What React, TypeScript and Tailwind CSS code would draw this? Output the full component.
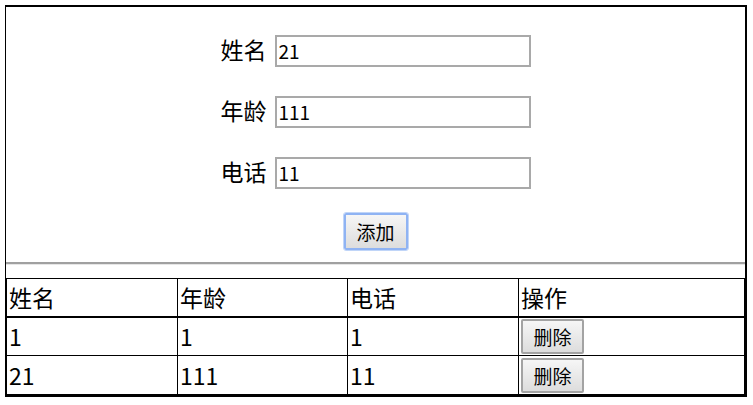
import React from "react";

const font = { fontFamily: '"Noto Sans CJK SC", "Noto Sans", sans-serif' };

function Field({ label, value }: { label: string; value: string }) {
  return (
    <div className="flex items-center gap-[8px]">
      <span className="text-[23px] leading-none text-black -mt-[3px]">{label}</span>
      <input
        readOnly
        value={value}
        className="w-[256px] h-[32px] border-2 border-[#a9a9a9] bg-white px-[2px] pb-[2px] text-[19px] text-black outline-none"
        style={font}
      />
    </div>
  );
}

function DelButton() {
  return (
    <button
      className="ml-[2px] w-[63px] h-[35px] rounded-[2px] border-2 border-[#a3a3a3] bg-gradient-to-b from-[#f6f6f6] to-[#dddddd] text-[19px] leading-none text-black"
      style={font}
    >
      删除
    </button>
  );
}

export default function App() {
  const rows = [
    { name: "1", age: "1", phone: "1" },
    { name: "21", age: "111", phone: "11" },
  ];
  return (
    <div className="w-[753px] h-[405px] bg-white pt-[5px] pl-[5px]" style={font}>
      <div className="w-[742px] h-[392px] border-t-2 border-l border-r-2 border-b-2 border-black flex flex-col">
        <div className="flex flex-col items-center pt-[28px]">
          <div className="flex flex-col items-center gap-[29px]">
            <Field label="姓名" value="21" />
            <Field label="年龄" value="111" />
            <Field label="电话" value="11" />
          </div>
          <button
            className="mt-[24px] w-[64px] h-[37px] rounded-[2px] border-2 border-[#8fb3f3] outline outline-1 outline-[#c0d5f8] bg-gradient-to-b from-[#f6f6f6] to-[#dddddd] text-[19px] leading-none text-black"
            style={font}
          >
            添加
          </button>
        </div>
        <div className="mt-[12px] h-[2px] bg-[#a0a0a0]" />
        <div className="h-[1px] bg-[#e6e6e6]" />
        <table className="mt-[13px] w-full table-fixed border-collapse text-[23px] text-black">
          <colgroup>
            <col className="w-[171px]" />
            <col className="w-[170px]" />
            <col className="w-[171px]" />
            <col />
          </colgroup>
          <thead>
            <tr className="h-[38px] border-b-2 border-black">
              <th className="border border-black px-[2px] text-left font-normal leading-none align-middle">姓名</th>
              <th className="border border-black px-[2px] text-left font-normal leading-none align-middle">年龄</th>
              <th className="border border-black px-[2px] text-left font-normal leading-none align-middle">电话</th>
              <th className="border border-black px-[2px] text-left font-normal leading-none align-middle">操作</th>
            </tr>
          </thead>
          <tbody>
            {rows.map((r, i) => (
              <tr key={i} className="h-[39px]">
                <td className="border border-black px-[2px] leading-none align-middle">{r.name}</td>
                <td className="border border-black px-[2px] leading-none align-middle">{r.age}</td>
                <td className="border border-black px-[2px] leading-none align-middle">{r.phone}</td>
                <td className="border border-black p-0 leading-none align-middle">
                  <DelButton />
                </td>
              </tr>
            ))}
          </tbody>
        </table>
      </div>
    </div>
  );
}
